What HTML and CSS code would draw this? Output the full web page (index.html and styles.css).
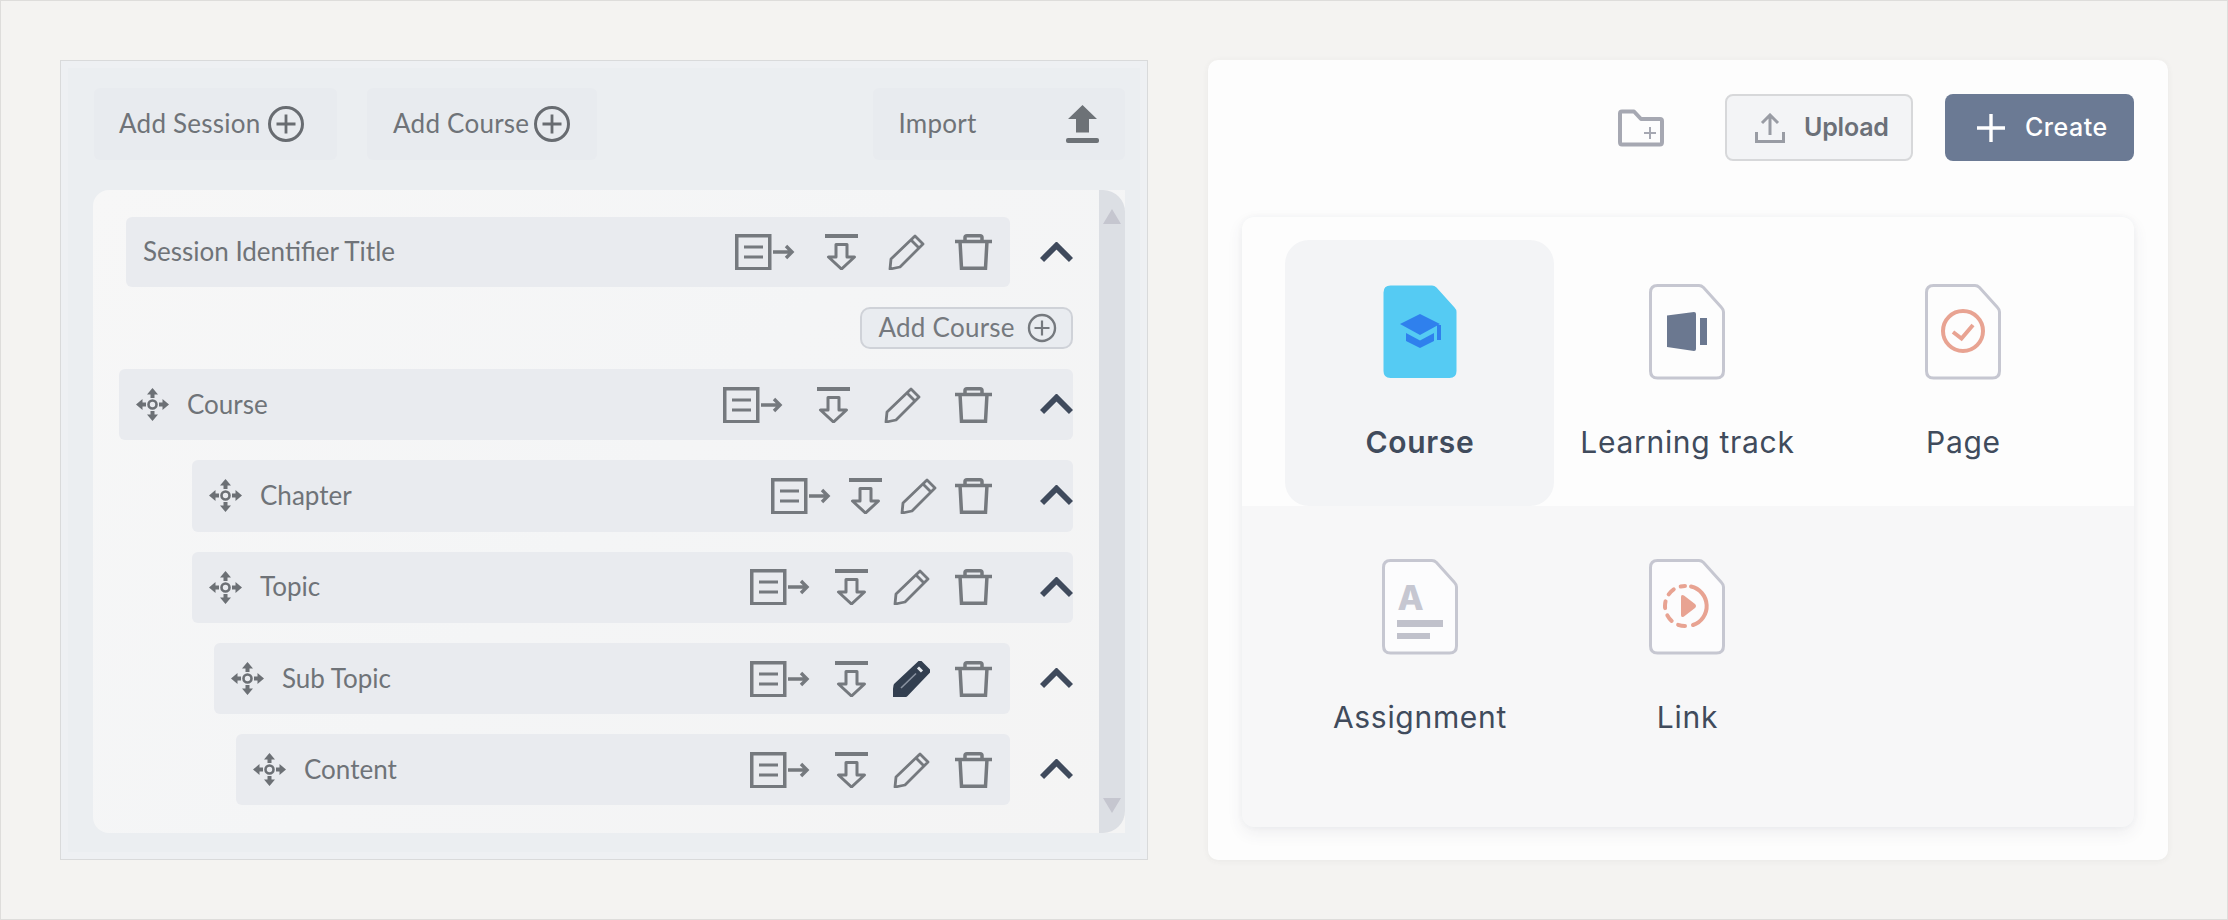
FILE: index.html
```html
<!DOCTYPE html>
<html lang="en">
<head>
<meta charset="utf-8">
<title>Course builder</title>
<link rel="stylesheet" href="styles.css">
</head>
<body>
<svg class="sprite" xmlns="http://www.w3.org/2000/svg">
  <symbol id="plus-circle" viewBox="0 0 38 38"><circle cx="19" cy="19" r="16.5" fill="none" stroke="currentColor" stroke-width="3"/><path d="M19 9.500V28.500M9.500 19H28.500" fill="none" stroke="currentColor" stroke-width="2.800"/></symbol>
  <symbol id="list-arrow" viewBox="0 0 60 36"><rect x="1.750" y="1.750" width="33" height="33" fill="none" stroke="currentColor" stroke-width="3.500"/><path d="M9 13H28M9 23H28" fill="none" stroke="currentColor" stroke-width="3.200"/><path d="M38 18H57M51 12L57 18L51 24" fill="none" stroke="currentColor" stroke-width="3.400"/></symbol>
  <symbol id="insert" viewBox="0 0 33 36"><path d="M0 2H33" fill="none" stroke="currentColor" stroke-width="4"/><path d="M11 10.500H22V23H29.500L16.500 35L3.500 23H11Z" fill="none" stroke="currentColor" stroke-width="3" stroke-linejoin="round"/></symbol>
  <symbol id="pencil" viewBox="0 0 37 36"><path d="M3 25L27 2L35 10L12 33L2 35Z" fill="none" stroke="currentColor" stroke-width="2.800" stroke-linejoin="round"/><path d="M23 6L31 14" fill="none" stroke="currentColor" stroke-width="2.800"/></symbol>
  <symbol id="pencil-dark" viewBox="0 0 37 36"><path d="M3 24.500L27 2L35 10L12.500 33.500L1.500 35Z" fill="#333f50" stroke="currentColor" stroke-width="5" stroke-linejoin="round"/><path d="M8 27L23 12.500" fill="none" stroke="#8a93a1" stroke-width="1.600"/><path d="M25 6.500L29 10.500" fill="none" stroke="#e9ecf0" stroke-width="3"/></symbol>
  <symbol id="trash" viewBox="0 0 37 36"><path d="M0 7.500H37M10 7V3.500Q10 1.750 12 1.750H25Q27 1.750 27 3.500V7M5 7L6.500 34.250H30.500L32 7" fill="none" stroke="currentColor" stroke-width="3.500"/></symbol>
  <symbol id="chevron" viewBox="0 0 33 21"><path d="M2 18L16.500 3.500L31 18" fill="none" stroke="currentColor" stroke-width="5.800"/></symbol>
  <symbol id="move" viewBox="0 0 33 33"><circle cx="16.500" cy="16.500" r="4" fill="none" stroke="currentColor" stroke-width="2.600"/><path d="M16.500 0L22 6.500H18.500V10H14.500V6.500H11ZM16.500 33L22 26.500H18.500V23H14.500V26.500H11ZM0 16.500L6.500 11V14.500H10V18.500H6.500V22ZM33 16.500L26.500 11V14.500H23V18.500H26.500V22Z" fill="currentColor"/></symbol>
  <symbol id="doc" viewBox="0 0 76 96"><path d="M8.500 1.500H50Q52.500 1.500 54.500 3.500L72.500 23.500Q74.500 25.500 74.500 28V87Q74.500 94 67.500 94H8.500Q1.500 94 1.500 87V8.500Q1.500 1.500 8.500 1.500Z" fill="none" stroke="#c6c7d1" stroke-width="3"/></symbol>
</svg>

<main class="page">
  <section class="builder">
    <div class="toolbar">
      <button class="tool-btn session-btn"><span class="tool-text">Add Session</span><svg class="plus-icon"><use href="#plus-circle"/></svg></button>
      <button class="tool-btn course-btn"><span class="tool-text">Add Course</span><svg class="plus-icon plus-tight"><use href="#plus-circle"/></svg></button>
      <button class="tool-btn import-btn"><span class="tool-text">Import</span>
        <svg class="import-icon" viewBox="0 0 33 38"><path d="M16.500 0L31 14H23V27.500H10V14H2Z" fill="currentColor"/><rect y="33" width="33" height="5" rx="2" fill="currentColor"/></svg>
      </button>
    </div>
    <div class="tree">
      <div class="tree-list">
        <div class="row row-session">
          <div class="bar bar-short"><span class="name name-plain">Session Identifier Title</span>
            <div class="tools tools-session"><svg class="i-list"><use href="#list-arrow"/></svg><svg class="i-insert"><use href="#insert"/></svg><svg class="i-sq"><use href="#pencil"/></svg><svg class="i-sq"><use href="#trash"/></svg></div>
          </div>
          <svg class="chevron chevron-out"><use href="#chevron"/></svg>
        </div>
        <div class="row-add"><button class="add-small"><span class="tool-text">Add Course</span><svg class="plus-small"><use href="#plus-circle"/></svg></button></div>
        <div class="row row-course">
          <div class="bar"><svg class="move"><use href="#move"/></svg><span class="name">Course</span>
            <div class="tools tools-course"><svg class="i-list"><use href="#list-arrow"/></svg><svg class="i-insert"><use href="#insert"/></svg><svg class="i-sq"><use href="#pencil"/></svg><svg class="i-sq"><use href="#trash"/></svg></div>
            <svg class="chevron"><use href="#chevron"/></svg>
          </div>
        </div>
        <div class="row row-chapter">
          <div class="bar"><svg class="move"><use href="#move"/></svg><span class="name">Chapter</span>
            <div class="tools tools-chapter"><svg class="i-list"><use href="#list-arrow"/></svg><svg class="i-insert"><use href="#insert"/></svg><svg class="i-sq"><use href="#pencil"/></svg><svg class="i-sq"><use href="#trash"/></svg></div>
            <svg class="chevron"><use href="#chevron"/></svg>
          </div>
        </div>
        <div class="row row-chapter">
          <div class="bar"><svg class="move"><use href="#move"/></svg><span class="name">Topic</span>
            <div class="tools tools-topic"><svg class="i-list"><use href="#list-arrow"/></svg><svg class="i-insert"><use href="#insert"/></svg><svg class="i-sq"><use href="#pencil"/></svg><svg class="i-sq"><use href="#trash"/></svg></div>
            <svg class="chevron"><use href="#chevron"/></svg>
          </div>
        </div>
        <div class="row row-subtopic">
          <div class="bar bar-short"><svg class="move"><use href="#move"/></svg><span class="name">Sub Topic</span>
            <div class="tools tools-topic"><svg class="i-list"><use href="#list-arrow"/></svg><svg class="i-insert"><use href="#insert"/></svg><svg class="i-sq i-dark"><use href="#pencil-dark"/></svg><svg class="i-sq"><use href="#trash"/></svg></div>
          </div>
          <svg class="chevron chevron-out"><use href="#chevron"/></svg>
        </div>
        <div class="row row-content">
          <div class="bar bar-short"><svg class="move"><use href="#move"/></svg><span class="name">Content</span>
            <div class="tools tools-topic"><svg class="i-list"><use href="#list-arrow"/></svg><svg class="i-insert"><use href="#insert"/></svg><svg class="i-sq"><use href="#pencil"/></svg><svg class="i-sq"><use href="#trash"/></svg></div>
          </div>
          <svg class="chevron chevron-out"><use href="#chevron"/></svg>
        </div>
      </div>
      <div class="scrollbar"><span class="arrow-up"></span><span class="arrow-down"></span></div>
    </div>
  </section>

  <section class="library">
    <div class="actions">
      <svg class="folder" viewBox="0 0 46 38"><path d="M4 2.500H16L23 10H42Q44 10 44 12V33Q44 35.500 42 35.500H4Q2 35.500 2 33V4.500Q2 2.500 4 2.500Z" fill="none" stroke="#a6a8b2" stroke-width="4" stroke-linejoin="round"/><path d="M32 18V30M26 24H38" fill="none" stroke="#a6a8b2" stroke-width="2"/></svg>
      <button class="btn btn-upload"><svg class="btn-icon" viewBox="0 0 30 30"><path d="M15 22V2.500M7 10L15 2L23 10M1.500 19V28.500H28.500V19" fill="none" stroke="#999ca4" stroke-width="3"/></svg><span class="btn-text">Upload</span></button>
      <button class="btn btn-create"><svg class="btn-plus" viewBox="0 0 28 28"><path d="M14 0V28M0 14H28" fill="none" stroke="#fff" stroke-width="3.400"/></svg><span class="btn-text">Create</span></button>
    </div>
    <div class="card">
      <div class="tiles tiles-top">
        <div class="tile tile-active">
          <svg class="doc" viewBox="0 0 76 96">
            <path d="M8.500 1.500H50Q52.500 1.500 54.500 3.500L72.500 23.500Q74.500 25.500 74.500 28V87Q74.500 94 67.500 94H8.500Q1.500 94 1.500 87V8.500Q1.500 1.500 8.500 1.500Z" fill="#55cbf3"/>
            <path d="M18 40L38 30L58 40L38 51Z" fill="#2f80ed"/>
            <path d="M24 49L38 56.500L52 49V57L38 64L24 57Z" fill="#2f80ed"/>
            <rect x="55" y="41" width="4" height="15" fill="#2f80ed"/>
          </svg>
          <span class="tile-label tile-label-active">Course</span>
        </div>
        <div class="tile">
          <svg class="doc" viewBox="0 0 76 96"><use href="#doc"/><path d="M18 31.500L45 28Q47 28 47 30V65Q47 67 45 67L18 63Z" fill="#6b7890"/><rect x="51" y="34" width="7" height="27" fill="#6b7890"/></svg>
          <span class="tile-label">Learning track</span>
        </div>
        <div class="tile">
          <svg class="doc" viewBox="0 0 76 96"><use href="#doc"/><circle cx="38" cy="47" r="20" fill="none" stroke="#e8a392" stroke-width="4"/><path d="M28 48L36.500 54.500L48 41" fill="none" stroke="#e8a392" stroke-width="4"/></svg>
          <span class="tile-label">Page</span>
        </div>
      </div>
      <div class="tiles tiles-bottom">
        <div class="tile">
          <svg class="doc" viewBox="0 0 76 96"><path class="doc-fill" d="M8.500 1.500H50Q52.500 1.500 54.500 3.500L72.500 23.500Q74.500 25.500 74.500 28V87Q74.500 94 67.500 94H8.500Q1.500 94 1.500 87V8.500Q1.500 1.500 8.500 1.500Z"/><use href="#doc"/><text class="doc-a" x="15.500" y="50.500">A</text><rect x="15" y="61" width="46" height="7" fill="#c0c1cb"/><rect x="15" y="74" width="33" height="6" fill="#c0c1cb"/></svg>
          <span class="tile-label">Assignment</span>
        </div>
        <div class="tile">
          <svg class="doc" viewBox="0 0 76 96"><path class="doc-fill" d="M8.500 1.500H50Q52.500 1.500 54.500 3.500L72.500 23.500Q74.500 25.500 74.500 28V87Q74.500 94 67.500 94H8.500Q1.500 94 1.500 87V8.500Q1.500 1.500 8.500 1.500Z"/><use href="#doc"/><path d="M42 27.500A20 20 0 0 1 44 66" fill="none" stroke="#e8a392" stroke-width="4" stroke-linecap="round"/><path d="M36 67A20 20 0 0 1 36 27" fill="none" stroke="#e8a392" stroke-width="4" stroke-linecap="round" stroke-dasharray="7 7.500"/><path d="M32 38Q32 35 35 36.500L46 45Q48 47 46 49L35 57.500Q32 59 32 56Z" fill="#e8a392"/></svg>
          <span class="tile-label">Link</span>
        </div>
      </div>
    </div>
  </section>
</main>
</body>
</html>
```
FILE: styles.css
```css
* { box-sizing: border-box; }
html, body { margin: 0; padding: 0; }
body { width: 2228px; height: 920px; overflow: hidden; background: #f4f3f1; }
button { font: inherit; margin: 0; }
.sprite { display: none; }

.page {
  display: flex;
  gap: 60px;
  width: 2228px;
  height: 920px;
  padding: 59px;
  border: 1px solid #dedddb;
}

/* Left panel */
.builder {
  width: 1089px;
  height: 800px;
  border: 1px solid #d9dadb;
  background: #ebeef1;
  box-shadow: inset 0 0 0 7px #eef0f3;
  padding: 27px 22px 0 32px;
  font-family: "Lato", "Nunito", sans-serif;
  color: #6f7378;
}
.toolbar { display: flex; height: 72px; margin-bottom: 30px; }
.tool-btn {
  display: flex;
  align-items: center;
  border: 0;
  height: 72px;
  border-radius: 6px;
  background: #e8ebef;
  color: #6f7378;
  font-size: 26px;
  font-family: inherit;
  padding: 0;
}
.tool-text { letter-spacing: 0.25px; padding-bottom: 2px; }
.session-btn { width: 243px; padding-left: 25px; margin-left: 1px; }
.course-btn { width: 230px; padding-left: 26px; margin-left: 30px; }
.import-btn { width: 252px; padding-left: 25px; padding-right: 26px; margin-left: auto; justify-content: space-between; }
.plus-icon { width: 38px; height: 38px; margin-left: 6px; color: #686c71; }
.plus-tight { margin-left: 4px; }
.import-icon { width: 33px; height: 38px; color: #6d7277; }

.tree {
  display: flex;
  height: 643px;
  border-radius: 16px 0 0 16px;
  background: linear-gradient(135deg, #f7f7f7 0%, #f4f5f6 50%, #f4f4f4 100%);
}
.tree-list {
  flex: 1;
  display: flex;
  flex-direction: column;
  gap: 20px;
  padding: 27px 26px 0 0;
}
.scrollbar {
  position: relative;
  width: 26px;
  background: #dcdfe4;
  border-radius: 0 22px 22px 0;
}
.arrow-up, .arrow-down {
  position: absolute;
  left: 4px;
  width: 0;
  height: 0;
  border-left: 9.500px solid transparent;
  border-right: 9.500px solid transparent;
}
.arrow-up { top: 19px; border-bottom: 15px solid #c5c6cf; }
.arrow-down { bottom: 20px; border-top: 15px solid #c5c6cf; }

.row { display: flex; align-items: center; height: 71.300px; }
.row-session { margin-left: 33px; height: 70px; }
.row-course { margin-left: 26px; }
.row-chapter { margin-left: 99px; }
.row-subtopic { margin-left: 121px; }
.row-content { margin-left: 143px; }

.bar {
  flex: 1;
  display: flex;
  align-items: center;
  height: 100%;
  border-radius: 6px;
  background: #e9ebef;
  padding-left: 17px;
}
.bar-short { padding-right: 18px; }
.name { font-size: 26px; margin-left: 18px; padding-bottom: 2px; color: #6f7378; }
.name-plain { margin-left: 0; }
.move { width: 33px; height: 33px; flex: none; color: #6c7075; }

.tools { display: flex; align-items: center; margin-left: auto; color: #75797e; }
.tools-session { gap: 30px; }
.tools-course { gap: 34px; }
.tools-chapter { gap: 18px; }
.tools-topic { gap: 25px; }
.i-list { width: 60px; height: 36px; }
.i-insert { width: 33px; height: 36px; }
.i-sq { width: 37px; height: 36px; }
.i-dark { color: #333f50; }
.chevron { width: 33px; height: 21px; flex: none; margin-left: 48px; color: #3f4a5c; }
.chevron-out { margin-left: 30px; }

.row-add { display: flex; justify-content: flex-end; }
.add-small {
  display: flex;
  align-items: center;
  width: 213px;
  height: 42px;
  padding: 0 0 0 16px;
  border: 2px solid #cfd2d8;
  border-radius: 10px;
  background: #e9ecf0;
  color: #75797e;
  font-family: inherit;
  font-size: 26px;
}
.plus-small { width: 30px; height: 30px; margin-left: 12px; }

/* Right panel */
.library {
  width: 960px;
  height: 800px;
  border-radius: 10px;
  background: #fdfdfd;
  box-shadow: 0 1px 6px rgba(60, 60, 60, 0.06);
  padding: 34px 34px 0;
  font-family: "Inter", "Liberation Sans", sans-serif;
}
.actions { display: flex; align-items: center; justify-content: flex-end; height: 67px; margin-bottom: 56px; }
.folder { width: 46px; height: 38px; margin-right: 61px; }
.btn {
  display: flex;
  align-items: center;
  height: 67px;
  border-radius: 8px;
  font-family: inherit;
  font-size: 25px;
}
.btn-text { padding-bottom: 2px; }
.btn-upload {
  width: 188px;
  padding: 0 0 0 28px;
  margin-right: 32px;
  border: 2px solid #d7d8da;
  background: #f3f4f6;
  color: #6b7078;
  font-weight: 600;
  letter-spacing: -0.2px;
}
.btn-icon { width: 30px; height: 30px; margin-right: 19px; }
.btn-create {
  width: 189px;
  padding: 0 0 0 32px;
  border: 0;
  background: #6b7a94;
  color: #fff;
  font-weight: 500;
  letter-spacing: 0.5px;
}
.btn-plus { width: 28px; height: 28px; margin-right: 20px; }

.card {
  height: 610px;
  border-radius: 12px;
  background: #f7f7f8;
  box-shadow: 0 6px 16px rgba(60, 70, 90, 0.08), 0 0 6px rgba(60, 70, 90, 0.04);
  overflow: hidden;
}
.tiles { display: grid; grid-template-columns: 269px 266px 286px; padding-left: 43px; }
.tiles-top { height: 289px; padding-top: 23px; background: #fdfdfd; }
.tiles-bottom { padding-top: 9px; }
.tile {
  display: flex;
  flex-direction: column;
  align-items: center;
  height: 266px;
  padding-top: 44px;
  color: #404b5c;
}
.tile-active { background: #f3f4f6; border-radius: 24px; }
.doc { width: 76px; height: 96px; flex: none; }
.doc-fill { fill: #fcfcfd; }
.doc-a { font-family: "Inter", sans-serif; font-weight: 800; font-size: 34px; fill: #c6c7d1; }
.tile-label { margin-top: 44px; font-size: 30px; line-height: 36px; letter-spacing: 0.7px; white-space: nowrap; }
.tile-label-active { font-weight: 600; }
```
